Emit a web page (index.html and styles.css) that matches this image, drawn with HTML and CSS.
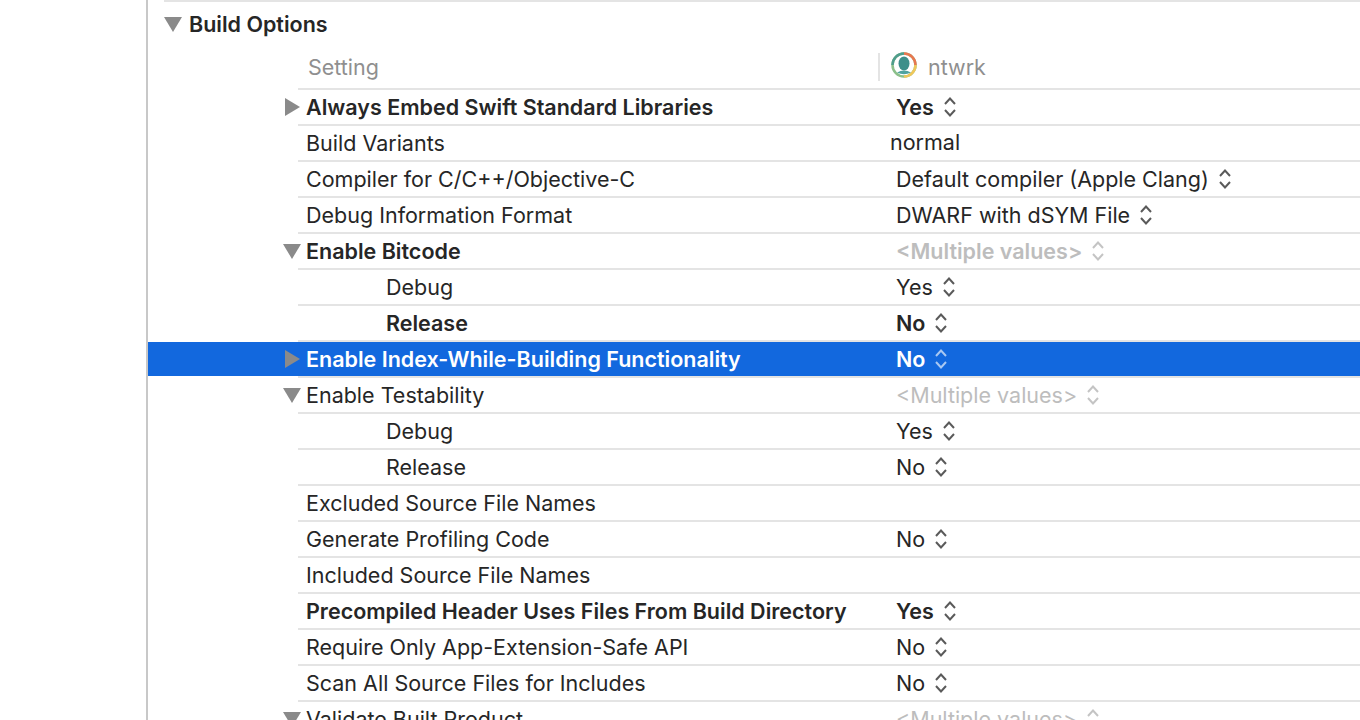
FILE: index.html
```html
<!doctype html>
<html lang="en">
<head>
	<meta charset="UTF-8" />
	<title>Build Settings</title>
	<link rel="stylesheet" href="styles.css">
</head>
<body>
	<svg class="defs" width="0" height="0">
		<symbol id="stepper" viewBox="0 0 14 22">
			<path d="M2 8 7 2.500 12 8M2 14 7 19.500 12 14" fill="none" stroke="currentColor" stroke-width="2"/>
		</symbol>
	</svg>
	<section id="wrap">
		<div class="top-line"></div>
		<h2 class="section-title"><i class="tri down"></i>Build Options</h2>
		<div class="head">
			<span class="head-name">Setting</span>
			<span class="head-target">
				<svg class="logo" width="26" height="26" viewBox="0 0 26 26">
					<circle cx="13" cy="13" r="11.500" fill="#fff" stroke="#8cc08a" stroke-width="2.500"/>
					<path d="M13 1.500A11.500 11.500 0 0 1 24.500 13" fill="none" stroke="#e8774f" stroke-width="2.500"/>
					<path d="M24.500 13A11.500 11.500 0 0 1 13 24.500" fill="none" stroke="#f0c75a" stroke-width="2.500"/>
					<path d="M1.500 13A11.500 11.500 0 0 1 13 1.500" fill="none" stroke="#4f9d8c" stroke-width="2.500"/>
					<ellipse cx="13" cy="11.500" rx="5.500" ry="7" fill="#3d8f8a"/>
					<path d="M6 20.500Q13 16.500 20 20.500Q13 24 6 20.500Z" fill="#4fa3a0"/>
				</svg>
				ntwrk
			</span>
		</div>
		<div id="rows"></div>
	</section>
	<script>
		// name, value, options: b = bold name, vb = bold value, tri, sub, multi, plain, sel
		const rows = [
			['Always Embed Swift Standard Libraries', 'Yes', {b: 1, vb: 1, tri: 'right'}],
			['Build Variants', 'normal', {plain: 1}],
			['Compiler for C/C++/Objective-C', 'Default compiler (Apple Clang)', {}],
			['Debug Information Format', 'DWARF with dSYM File', {}],
			['Enable Bitcode', '<Multiple values>', {b: 1, vb: 1, tri: 'down', multi: 1}],
			['Debug', 'Yes', {sub: 1}],
			['Release', 'No', {sub: 1, b: 1, vb: 1}],
			['Enable Index-While-Building Functionality', 'No', {b: 1, vb: 1, tri: 'right', sel: 1}],
			['Enable Testability', '<Multiple values>', {tri: 'down', multi: 1}],
			['Debug', 'Yes', {sub: 1}],
			['Release', 'No', {sub: 1}],
			['Excluded Source File Names', '', {}],
			['Generate Profiling Code', 'No', {}],
			['Included Source File Names', '', {}],
			['Precompiled Header Uses Files From Build Directory', 'Yes', {b: 1, vb: 1}],
			['Require Only App-Extension-Safe API', 'No', {}],
			['Scan All Source Files for Includes', 'No', {}],
			['Validate Built Product', '<Multiple values>', {tri: 'down', multi: 1}]
		];
		const box = document.getElementById('rows');
		rows.forEach(r => {
			const o = r[2];
			const row = document.createElement('div');
			row.className = 'row' + (o.sel ? ' selected' : '');

			const body = document.createElement('div');
			body.className = 'row-body';
			if (o.tri) {
				const t = document.createElement('i');
				t.className = 'tri ' + o.tri;
				body.appendChild(t);
			}
			const name = document.createElement('span');
			name.className = 'name' + (o.b ? ' bold' : '') + (o.sub ? ' sub' : '');
			name.textContent = r[0];
			body.appendChild(name);

			const val = document.createElement('span');
			val.className = 'value' + (o.vb ? ' bold' : '') + (o.multi ? ' multi' : '') + (o.plain ? ' plain' : '');
			val.textContent = r[1];
			if (r[1] && !o.plain) {
				val.insertAdjacentHTML('beforeend', '<svg class="stepper"><use href="#stepper"/></svg>');
			}
			body.appendChild(val);

			row.appendChild(body);
			box.appendChild(row);
		});
	</script>
</body>
</html>
```

FILE: styles.css
```css
*{
	margin: 0;
	padding: 0;
	box-sizing: border-box;
}
html,body{
	height: 720px;
	overflow: hidden;
	background: #fff;
}
body{
	font-family: Inter, "Liberation Sans", sans-serif;
	font-size: 21.5px;
	color: #262626;
}
.defs{
	display: block;
}
#wrap{
	margin-left: 146px;
	height: 720px;
	border-left: 2px solid #c8c8c8;
}
.top-line{
	height: 2px;
	margin-left: 16px;
	background: #e4e4e4;
}
.section-title{
	display: flex;
	align-items: center;
	height: 44px;
	padding-left: 16px;
	font-size: 21.500px;
	font-weight: 600;
}
.section-title .tri{
	margin-right: 7px;
}

.tri{
	display: block;
	width: 0;
	height: 0;
}
.tri.down{
	border-left: 9px solid transparent;
	border-right: 9px solid transparent;
	border-top: 15px solid #8a8a8a;
}
.tri.right{
	border-top: 9px solid transparent;
	border-bottom: 9px solid transparent;
	border-left: 15px solid #8a8a8a;
}

.head{
	display: flex;
	align-items: center;
	height: 44px;
	margin-left: 150px;
	border-bottom: 2px solid #e4e4e4;
	color: #8f8f8f;
}
.head-name{
	width: 580px;
	padding-left: 10px;
}
.head-target{
	display: flex;
	align-items: center;
	height: 28px;
	padding-left: 11px;
	border-left: 2px solid #e4e4e4;
}
.logo{
	margin-right: 11px;
	position: relative;
	top: -2px;
}

.row::after{
	content: "";
	display: block;
	height: 2px;
	margin-left: 150px;
	background: #e4e4e4;
}
.row-body{
	position: relative;
	display: flex;
	align-items: center;
	height: 34px;
	padding-left: 158px;
}
.row-body .tri{
	position: absolute;
	top: 8px;
}
.row-body .tri.down{
	left: 135px;
	top: 10px;
}
.row-body .tri.right{
	left: 137px;
}
.name{
	width: 590px;
	white-space: nowrap;
}
.name.sub{
	padding-left: 80px;
}
.bold{
	font-weight: 600;
}
.value{
	display: flex;
	align-items: center;
	white-space: nowrap;
}
.value.plain{
	margin-left: -6px;
	position: relative;
	top: -1px;
}
.value.multi{
	color: #bdbdbd;
}
.stepper{
	width: 14px;
	height: 22px;
	margin-left: 9px;
	color: #5a5a5a;
}
.multi .stepper{
	color: #c4c4c4;
}

.selected .row-body{
	background: #1268de;
	color: #fff;
}
.selected .stepper{
	color: #a9c8f2;
}
```
